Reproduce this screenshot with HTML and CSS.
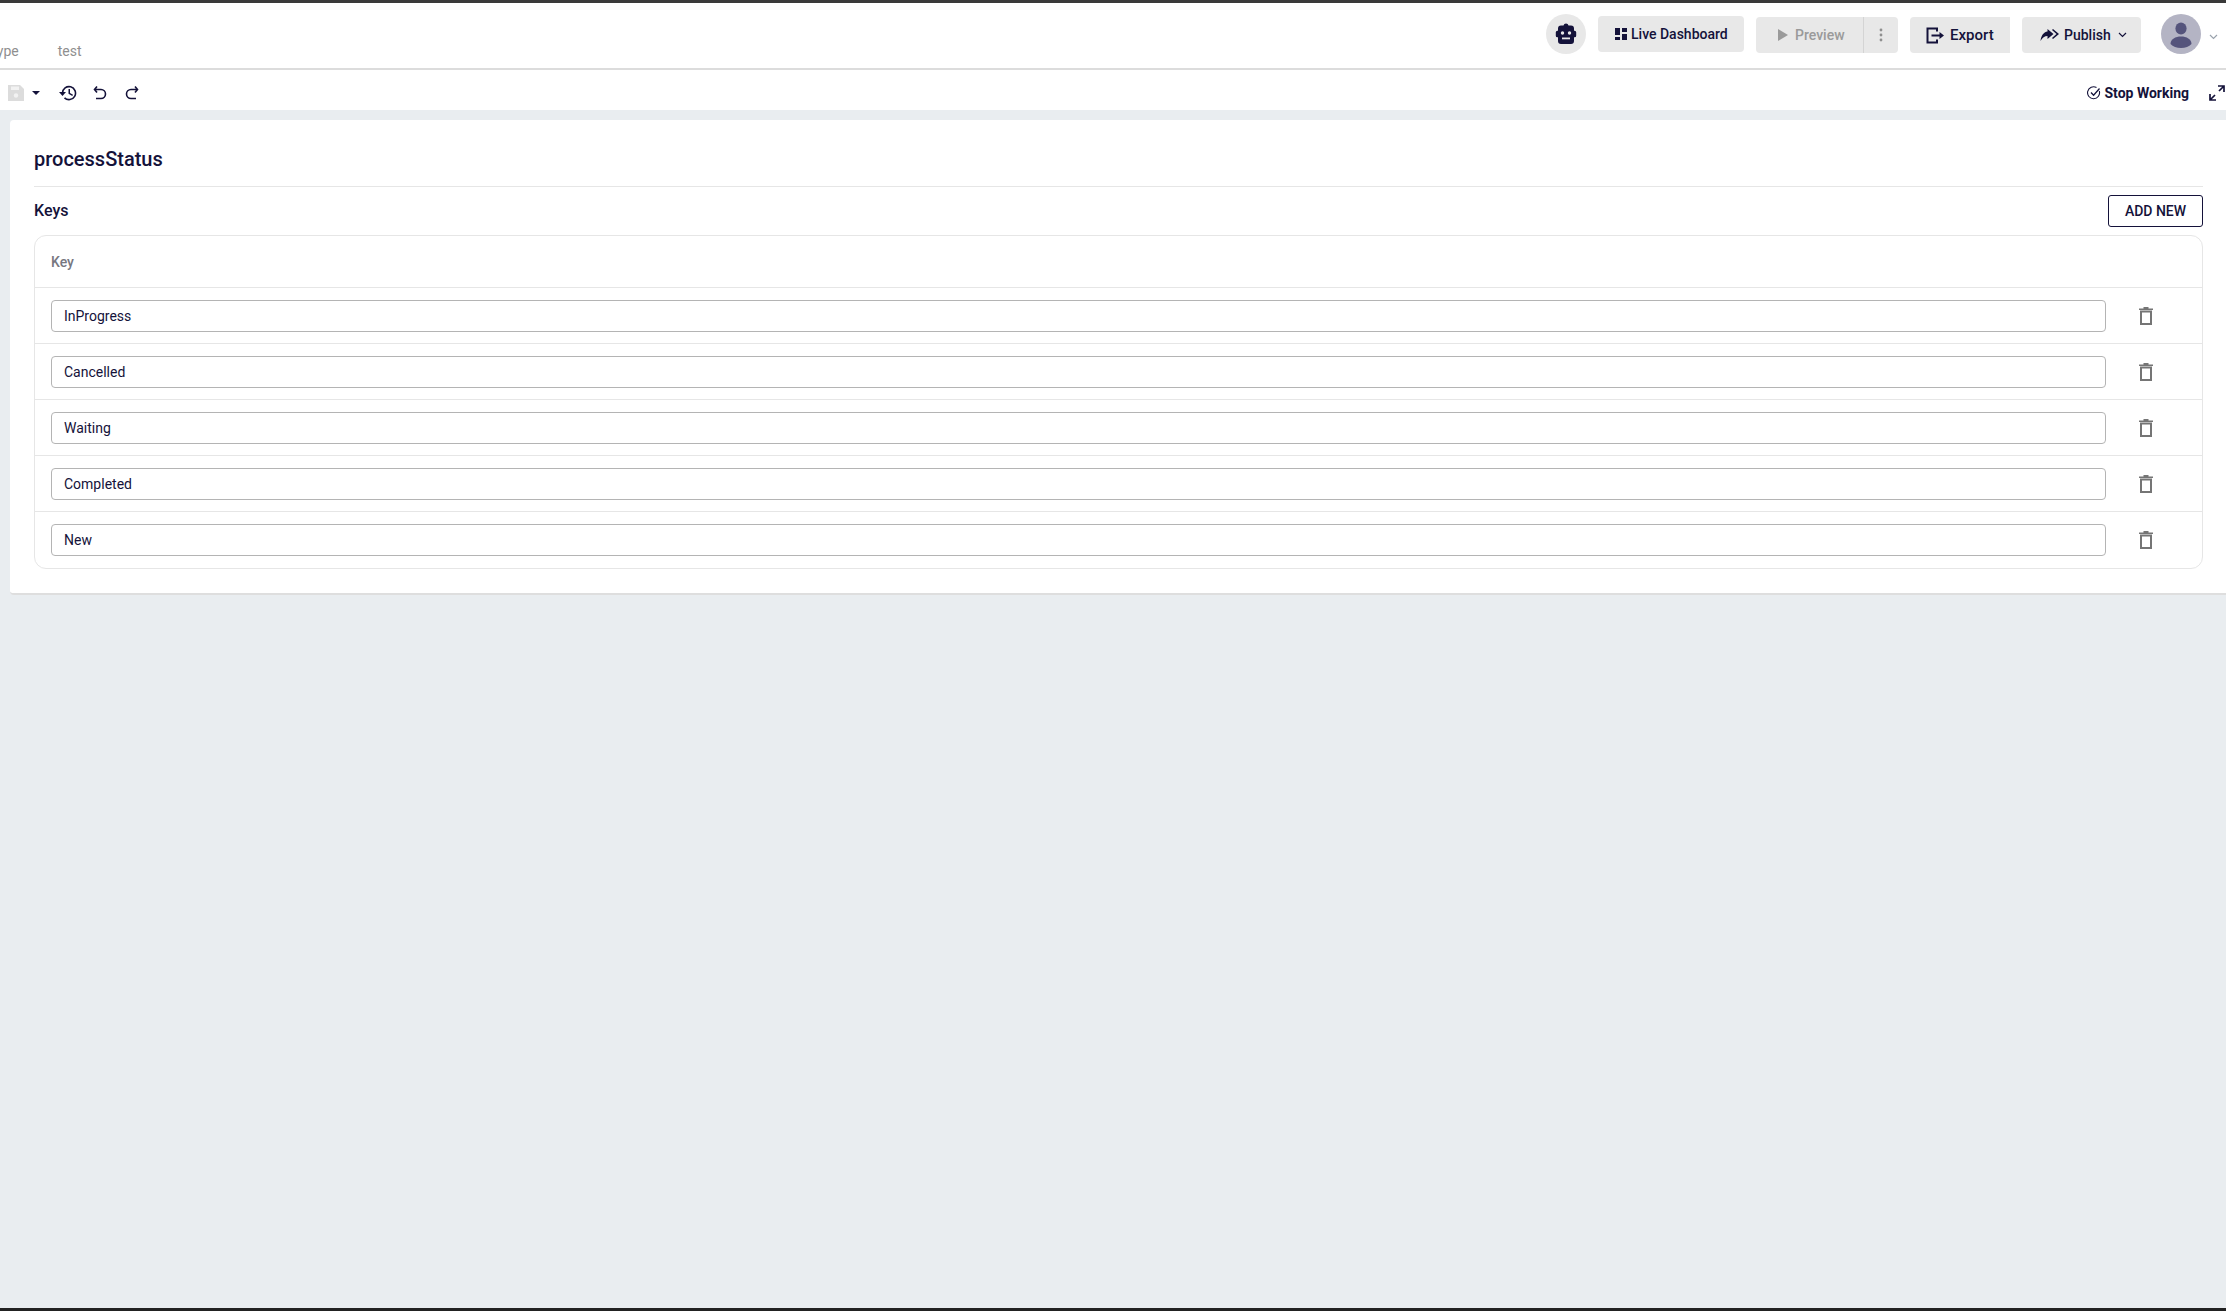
FILE: index.html
```html
<!DOCTYPE html>
<html lang="en">
<head>
<meta charset="utf-8">
<title>processStatus</title>
<link rel="stylesheet" href="styles.css">
</head>
<body>
<div class="page">
  <header class="topbar">
    <nav class="tabs"><span class="tab tab-cut">Type</span><span class="tab">test</span></nav>
    <div class="actions">
      <span class="bot"><svg width="24" height="24" viewBox="0 0 24 24"><path class="ink" d="M12 1.500a2.600 2.600 0 0 1 2.500 2H17a3 3 0 0 1 3 3v2.200h.6a1.600 1.600 0 0 1 1.600 1.600v3.400a1.600 1.600 0 0 1-1.600 1.600H20V19a3 3 0 0 1-3 3H7a3 3 0 0 1-3-3v-3.700h-.6a1.600 1.600 0 0 1-1.600-1.600v-3.400a1.600 1.600 0 0 1 1.600-1.600H4V6.500a3 3 0 0 1 3-3h2.500a2.600 2.600 0 0 1 2.500-2z"/><circle cx="8.500" cy="11" r="1.700" fill="#e8e8e8"/><circle cx="15.500" cy="11" r="1.700" fill="#e8e8e8"/><rect x="8" y="15.500" width="8" height="1.800" fill="#e8e8e8"/></svg></span>
      <button class="btn btn-live"><svg width="12" height="12" viewBox="0 0 12 12"><path class="ink" d="M0 0h5v7H0zM7 0h5v4H7zM7 6h5v6H7zM0 9h5v3H0z"/></svg>Live Dashboard</button>
      <div class="split">
        <button class="btn-preview"><svg width="10" height="12" viewBox="0 0 10 12"><path d="M0 0l10 6-10 6z" fill="#9a9a9a"/></svg>Preview</button>
        <button class="btn-more"><svg width="4" height="14" viewBox="0 0 4 14"><g fill="#8f8f8f"><circle cx="2" cy="2" r="1.400"/><circle cx="2" cy="7" r="1.400"/><circle cx="2" cy="12" r="1.400"/></g></svg></button>
      </div>
      <button class="btn btn-export"><svg width="19" height="17" viewBox="0 0 19 17"><path d="M11 4.500V1.500H1.500v14H11v-3" fill="none" stroke="#14123a" stroke-width="2"/><path class="ink" d="M5.500 7.600h8V5l4.500 3.500-4.500 3.500V9.400h-8z"/></svg>Export</button>
      <button class="btn btn-publish"><svg width="20" height="14" viewBox="0 0 20 14"><path class="ink" d="M7.500 1l6 5-6 5V8C4.500 8 2.500 9.500.5 13c.5-5 3-9 7-9.500zM13 1l6 5-6 5-1-1 4.500-4L12 2z"/></svg>Publish<svg class="chev" width="9" height="6" viewBox="0 0 9 6"><path d="M1 1l3.500 3.500L8 1" fill="none" stroke="#14123a" stroke-width="1.200"/></svg></button>
      <span class="avatar"><svg width="40" height="40" viewBox="0 0 40 40"><circle cx="20" cy="20" r="20" fill="#b4b4c4"/><ellipse cx="20" cy="14.500" rx="5.600" ry="6" fill="#55547c"/><path d="M9.500 30c0-5 5-7.500 10.500-7.500S30.500 25 30.500 30c-2.500 2.800-6 4-10.500 4s-8-1.200-10.500-4z" fill="#55547c"/></svg></span>
      <svg class="avatar-chev" width="9" height="6" viewBox="0 0 9 6"><path d="M1 1l3.500 3.500L8 1" fill="none" stroke="#9aa3ad" stroke-width="1.200"/></svg>
    </div>
  </header>
  <div class="toolbar">
    <div class="tools">
      <svg class="save" width="16" height="16" viewBox="0 0 16 16"><path d="M0 0h12l4 4v12H0z" fill="#dcdcdc"/><path d="M3 1.500h8v3.500H3z" fill="#f2f2f2"/><circle cx="8" cy="10.500" r="2.200" fill="#f2f2f2"/></svg>
      <svg class="caret" width="8" height="4" viewBox="0 0 8 4"><path class="ink" d="M0 0h8L4 4z"/></svg>
      <svg class="history" width="18" height="16" viewBox="0 0 18 16"><path d="M3.500 8a6.500 6.500 0 1 1 2 4.800" fill="none" stroke="#14123a" stroke-width="1.600"/><path class="ink" d="M0 7h7L3.500 11zM9.500 4h1.500v4l3 1.800-.7 1.200-3.800-2.200z"/></svg>
      <svg class="undo" width="14" height="16" viewBox="0 0 14 16"><path d="M4 1.500L1.500 4.500 4 7.500M2 4.500h6a4.500 4.500 0 0 1 0 9H3" fill="none" stroke="#14123a" stroke-width="1.600"/></svg>
      <svg class="redo" width="14" height="16" viewBox="0 0 14 16"><path d="M10 1.500l2.500 3L10 7.500M12 4.500H6a4.500 4.500 0 0 0 0 9h5" fill="none" stroke="#14123a" stroke-width="1.600"/></svg>
    </div>
    <div class="status">
      <span class="stop"><svg width="14" height="14" viewBox="0 0 14 14"><path d="M12.300 5A6 6 0 1 1 9.500 1.500" fill="none" stroke="#14123a" stroke-width="1.100"/><path d="M4 6.500l2.600 2.700L12.500 2.500" fill="none" stroke="#14123a" stroke-width="1.300"/></svg>Stop Working</span>
      <svg class="expand" width="16" height="16" viewBox="0 0 16 16"><path d="M9 1h6v6M15 1L10 6M1 9v6h6M1 15l5-5" fill="none" stroke="#14123a" stroke-width="1.700"/></svg>
    </div>
  </div>
  <main class="content">
    <section class="card">
      <h1 class="title">processStatus</h1>
      <div class="keys-head">
        <h2 class="keys-title">Keys</h2>
        <button class="add">ADD NEW</button>
      </div>
      <div class="table">
        <div class="table-head">Key</div>
        <div class="row"><input class="field" value="InProgress"><span class="del"><svg class="trash" width="14" height="18" viewBox="0 0 14 18"><path d="M4.500 0h5v1.500h4.500V3H0V1.500h4.500z" fill="#757575"/><rect x="2" y="4.500" width="10" height="12.500" fill="none" stroke="#757575" stroke-width="2"/></svg></span></div>
        <div class="row"><input class="field" value="Cancelled"><span class="del"><svg class="trash" width="14" height="18" viewBox="0 0 14 18"><path d="M4.500 0h5v1.500h4.500V3H0V1.500h4.500z" fill="#757575"/><rect x="2" y="4.500" width="10" height="12.500" fill="none" stroke="#757575" stroke-width="2"/></svg></span></div>
        <div class="row"><input class="field" value="Waiting"><span class="del"><svg class="trash" width="14" height="18" viewBox="0 0 14 18"><path d="M4.500 0h5v1.500h4.500V3H0V1.500h4.500z" fill="#757575"/><rect x="2" y="4.500" width="10" height="12.500" fill="none" stroke="#757575" stroke-width="2"/></svg></span></div>
        <div class="row"><input class="field" value="Completed"><span class="del"><svg class="trash" width="14" height="18" viewBox="0 0 14 18"><path d="M4.500 0h5v1.500h4.500V3H0V1.500h4.500z" fill="#757575"/><rect x="2" y="4.500" width="10" height="12.500" fill="none" stroke="#757575" stroke-width="2"/></svg></span></div>
        <div class="row"><input class="field" value="New"><span class="del"><svg class="trash" width="14" height="18" viewBox="0 0 14 18"><path d="M4.500 0h5v1.500h4.500V3H0V1.500h4.500z" fill="#757575"/><rect x="2" y="4.500" width="10" height="12.500" fill="none" stroke="#757575" stroke-width="2"/></svg></span></div>
      </div>
    </section>
  </main>
</div>
</body>
</html>
```
FILE: styles.css
```css
* { box-sizing: border-box; }
html, body { margin: 0; height: 100%; overflow: hidden; }
body { font-family: Roboto, "Liberation Sans", sans-serif; color: #14123a; }
button { font-family: inherit; }
.ink { fill: #14123a; }
.page {
  height: 1311px;
  display: flex;
  flex-direction: column;
  background: #e9edf0;
  border-top: 3px solid #3a3a3a;
  border-bottom: 3px solid #222;
}
.topbar {
  height: 67px;
  flex: none;
  display: flex;
  justify-content: space-between;
  background: #fff;
  border-bottom: 2px solid #dcdcdc;
}
.tabs { display: flex; gap: 39px; margin-left: -11px; padding-top: 40px; font-size: 14px; line-height: 16px; color: #8f8f8f; }
.actions { display: flex; align-items: flex-start; padding: 11px 8px 0 0; }
.bot { width: 40px; height: 40px; border-radius: 50%; background: #e8e8e8; display: flex; align-items: center; justify-content: center; margin-right: 12px; }
.btn {
  display: flex;
  align-items: center;
  border: 0;
  background: #e8e8e8;
  border-radius: 4px;
  height: 36px;
  font-size: 14px;
  font-weight: 500;
  color: #14123a;
  padding: 0;
}
.btn-live { width: 146px; padding-left: 17px; gap: 4px; margin: 2px 12px 0 0; }
.split { display: flex; width: 142px; height: 36px; margin: 3px 12px 0 0; background: #e8e8e8; border-radius: 4px; }
.btn-preview { width: 108px; border: 0; background: none; border-right: 1px solid #d4d4d4; display: flex; align-items: center; padding: 0 0 0 22px; gap: 7px; font-size: 14px; font-weight: 500; color: #9a9a9a; }
.btn-more { flex: 1; border: 0; background: none; display: flex; align-items: center; justify-content: center; padding: 0; }
.btn-export { width: 100px; margin: 3px 12px 0 0; padding-left: 16px; gap: 5px; font-size: 15px; border-radius: 4px 0 0 4px; }
.btn-publish { width: 119px; margin: 3px 20px 0 0; padding-left: 18px; gap: 4px; }
.chev { margin-left: 3px; }
.avatar { width: 40px; height: 40px; margin-right: 8px; }
.avatar svg { display: block; }
.avatar-chev { margin: 20px 0 0 0; }
.toolbar {
  height: 40px;
  flex: none;
  display: flex;
  justify-content: space-between;
  align-items: center;
  padding-top: 5px;
  background: #fff;
}
.tools { display: flex; align-items: center; padding-left: 8px; }
.save { margin-right: 8px; }
.caret { margin-right: 19px; }
.history { margin-right: 16px; }
.undo { margin-right: 18px; }
.status { display: flex; align-items: center; }
.stop { display: flex; align-items: center; gap: 3px; font-size: 14px; font-weight: 700; margin-right: 20px; }
.expand { margin-right: 1px; }
.content { flex: 1; padding: 10px 0 0 10px; }
.card {
  background: #fff;
  border-radius: 4px 0 0 4px;
  border-bottom: 2px solid #dedede;
  padding: 25px 23px 24px 24px;
}
.title {
  margin: 0 0 8px;
  padding-bottom: 13px;
  border-bottom: 1px solid #e6e6e6;
  font-size: 20px;
  line-height: 28px;
  font-weight: 500;
}
.keys-head { display: flex; justify-content: space-between; align-items: center; margin-bottom: 8px; }
.keys-title { margin: 0 0 1px; font-size: 16px; line-height: 22px; font-weight: 500; }
.add {
  width: 95px;
  height: 32px;
  border: 1px solid #14123a;
  border-radius: 3px;
  background: #fff;
  color: #14123a;
  font-size: 14px;
  font-weight: 500;
  padding: 0;
}
.table { border: 1px solid #e6e6e6; border-radius: 12px; }
.table-head { height: 51px; padding: 0 16px; display: flex; align-items: center; font-size: 14px; font-weight: 500; color: #77777f; }
.row { height: 56px; border-top: 1px solid #e6e6e6; display: flex; align-items: center; padding-left: 16px; }
.row:last-child { height: 57px; }
.field {
  width: 2055px;
  height: 32px;
  border: 1px solid #b4b4b4;
  border-radius: 4px;
  padding: 0 12px;
  font: 400 14px Roboto, "Liberation Sans", sans-serif;
  color: #14123a;
}
.del { flex: 1; display: flex; justify-content: center; padding-right: 16px; }
.trash { display: block; }
```
